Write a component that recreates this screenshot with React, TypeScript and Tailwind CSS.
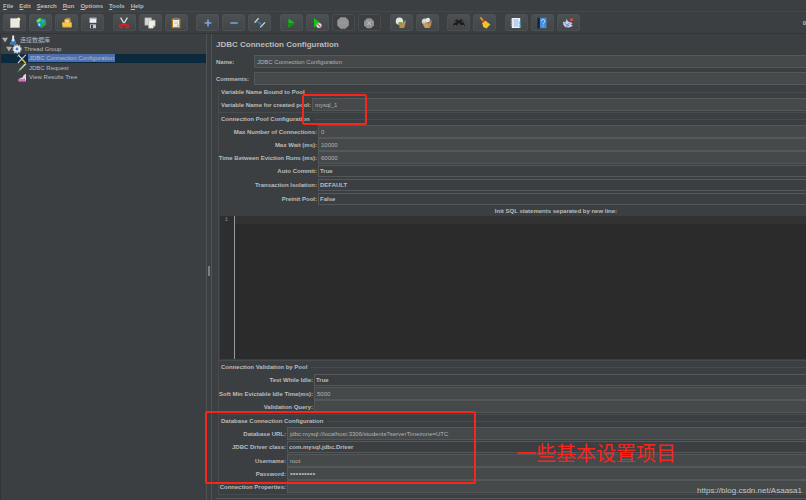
import React, { ReactNode, useState } from "react";

const svgProps = { viewBox: "0 0 12 12", className: "size-3 shrink-0", "aria-hidden": true } as const;
const treeSvgProps = { viewBox: "0 0 12 12", className: "size-[10px] shrink-0", "aria-hidden": true } as const;

const HAND = "M3.6 6 4.4 8v3H9l1.2-3L11 2 9.6 5 9 2.4 8 6 6 5z";

const ICONS: Record<string, ReactNode> = {
  new: (
    <svg {...svgProps}>
      <path d="M1.5 1.5h9v9h-9z" fill="#e9e9e2" stroke="#c9c9c0" strokeWidth=".6" />
      <circle cx="9.6" cy="2.2" r="1.6" fill="#f4efb4" />
    </svg>
  ),
  templates: (
    <svg {...svgProps}>
      <path d="M1.2 3.2 5 .8l5.6 1.6.6 5L6.6 11 2.4 8z" fill="#25a83c" />
      <path d="M1.5 3.5 5 1l1 2.4-3 2.4z" fill="#7fdc62" />
      <path d="m2.6 5.6 3.6-1 .6 6.2-3.6-1.6z" fill="#1d8fd0" />
      <path d="m6 2.4 3.8.8-1 3.2-2.6-.6z" fill="#2f9fe0" />
      <path d="m3.6 6.2 1.6.6v2.6l-1.6-1z" fill="#b5ecff" />
    </svg>
  ),
  open: (
    <svg {...svgProps}>
      <path d="M3 5.5V2.4L5.6.8h3.2l1 1.6v3z" fill="#b8832d" />
      <path d="M4.2 2.6h4V6h-4z" fill="#ecdca8" />
      <path d="M1 5.4h9.8v5.2H1.6z" fill="#e5a931" />
      <path d="M1.4 5.6h8.8v3.8H1.8z" fill="#f3c551" />
    </svg>
  ),
  save: (
    <svg {...svgProps}>
      <path d="M.8.8h10.4v10.4H2L.8 10z" fill="#444a53" />
      <path d="M2.6.8h6.8v5H2.6z" fill="#f1f1f1" />
      <path d="M2.6.8h6.8v1.4H2.6z" fill="#a7b3c4" />
      <path d="M3 7.4h6v3.8H3z" fill="#c5c8cc" />
      <path d="M4 8h1.8v3H4z" fill="#30343a" />
    </svg>
  ),
  cut: (
    <svg {...svgProps}>
      <path d="m2.6.6 4 6.8M9.4.6l-4 6.8" stroke="#dfe3e6" strokeWidth="1.2" />
      <path d="m6 6.4-1.6 1.2M6 6.4l1.6 1.2" stroke="#dc2020" strokeWidth="1.8" />
      <circle cx="3" cy="9.2" r="1.5" fill="none" stroke="#dc2020" strokeWidth="1.4" />
      <circle cx="9" cy="9.2" r="1.5" fill="none" stroke="#dc2020" strokeWidth="1.4" />
    </svg>
  ),
  copy: (
    <svg {...svgProps}>
      <path d="M.8.8h6.7v7.5H.8z" fill="#d8d8d5" stroke="#9c9c98" strokeWidth=".5" />
      <path d="M4.5 3.2h6.7v5.6l-2 2.4H4.5z" fill="#eeeeea" stroke="#a9a9a4" strokeWidth=".5" />
      <path d="M9 11V8.8h2.2z" fill="#9d9d98" />
    </svg>
  ),
  paste: (
    <svg {...svgProps}>
      <path d="M1.8 1.5h8.6v9.8H1.8z" fill="#bb7a20" />
      <path d="M3 2.7h6.2v7.2H3z" fill="#eeeeea" />
      <path d="M4 .7h4v2.2H4z" fill="#777a7d" />
      <path d="M4.2 5h3.8M4.2 6.6h3.8" stroke="#b7b7b7" strokeWidth=".6" />
      <path d="M7.2 9.9V7.8h2z" fill="#aaa" />
    </svg>
  ),
  expand: (
    <svg {...svgProps}>
      <path d="M6 2.6v6.8M2.6 6h6.8" stroke="#75a8e5" strokeWidth="1.5" />
    </svg>
  ),
  collapse: (
    <svg {...svgProps}>
      <path d="M2.3 6h7.4" stroke="#75a8e5" strokeWidth="1.5" />
    </svg>
  ),
  toggle: (
    <svg {...svgProps}>
      <path d="m.6 5.6 4-4.4" stroke="#d7ddd2" strokeWidth="1.3" />
      <path d="m1.2 6.2 2-2" stroke="#74a766" strokeWidth=".9" />
      <path d="m6.2 10.4 4.8-5" stroke="#d7ddd2" strokeWidth="1.3" />
      <path d="m6.4 11 2-2" stroke="#74a766" strokeWidth=".9" />
      <path d="m4.4 5 2.8 2.5" stroke="#2878cf" strokeWidth="1.7" />
    </svg>
  ),
  start: (
    <svg {...svgProps}>
      <path d="M3.5 1.5 9.5 6l-6 4.8z" fill="#14c414" />
      <path d="M3.5 6h6l-6 4.8z" fill="#0a980a" />
    </svg>
  ),
  startNoPause: (
    <svg {...svgProps}>
      <path d="M3 1 9 5.8l-6 5z" fill="#14c414" />
      <circle cx="8" cy="8.5" r="2.5" fill="#e9eef4" stroke="#8198b2" strokeWidth=".5" />
      <path d="m6.5 7 3 3" stroke="#e34646" strokeWidth="1.1" />
    </svg>
  ),
  stop: (
    <svg {...svgProps}>
      <path d="M3.5.2h5L11.8 3.5v5L8.5 11.8h-5L.2 8.5v-5z" fill="#939393" />
      <path d="M2.5 6h7" stroke="#9e9e9e" />
    </svg>
  ),
  shutdown: (
    <svg {...svgProps}>
      <path d="M4 1.2h4l3 3v4l-3 3H4l-3-3v-4z" fill="#929292" />
      <path d="m4.4 4.4 3.4 3.4m0-3.4L4.4 7.8" stroke="#bababa" strokeWidth="1.1" />
    </svg>
  ),
  clear: (
    <svg {...svgProps}>
      <circle cx="4.4" cy="4.2" r="3.6" fill="#e6e8e4" />
      <path d={HAND} fill="#b98a55" />
      <path d="M3.4 5.2h3.8v2H3.4z" fill="#62b431" />
    </svg>
  ),
  clearAll: (
    <svg {...svgProps}>
      <circle cx="3.8" cy="4.4" r="3" fill="#d6d7d3" />
      <circle cx="7" cy="3" r="2.2" fill="#e6e8e4" />
      <path d={HAND} fill="#b98a55" />
      <path d="m2 5.4.4 3L4 11h3V7L4.6 5.4 4 6.6z" fill="#c79b69" />
    </svg>
  ),
  search: (
    <svg {...svgProps}>
      <path d="M2.8 2.4h2l.6 1h1.2l.6-1h2l2.4 4.8v2H7.8L7.2 6.6H4.8L4.2 9.2H.4v-2z" fill="#1c1c1d" />
      <path d="M1 8.8h2.6M8.4 8.8H11" stroke="#9c5b36" />
      <path d="m3.2 3.8-1 2M8.8 3.8l1 2" stroke="#777" strokeWidth=".6" />
    </svg>
  ),
  resetSearch: (
    <svg {...svgProps}>
      <path d="m1.4.4 2.8 3.4" stroke="#dc9830" strokeWidth="1.8" />
      <path d="m2.4 4.8 3.4-2.4 1 1.6-3.4 2.4z" fill="#cf3327" />
      <path d="m3.2 6.2 3.4-2.4 4.8 3.8-4 3.8-3-1.4z" fill="#f2cc29" />
      <path d="m5.4 6.4 2.8 3.4M7 5.4l3 2.8" stroke="#b88a14" strokeWidth=".4" />
    </svg>
  ),
  functions: (
    <svg {...svgProps}>
      <path d="M1.8 1h8.4v10H1.8z" fill="#f1f4f8" />
      <path d="M3.6 3h5M3.6 5h5M3.6 7h5M3.6 9h5" stroke="#6d9ddb" strokeWidth=".8" />
      <path d="M.8 2.3h2M.8 4.3h2M.8 6.3h2M.8 8.3h2" stroke="#c5c8cb" strokeWidth=".7" />
      <path d="M9.5 4.5h1.6v3H9.5z" fill="#3583d8" />
      <path d="M9.5 8h1.6v2.8H9.5z" fill="#49ae3d" />
    </svg>
  ),
  help: (
    <svg {...svgProps}>
      <path d="M1.6.8h3v10.4h-3z" fill="#141b25" />
      <path d="M3.8.8h6.6v10.4H3.8z" fill="#458cdf" />
      <path d="M5.4 4.2c0-2.2 3.4-2.2 3.4 0 0 1.5-1.7 1.3-1.7 3M7.1 8.4v1" fill="none" stroke="#d7e9ff" strokeWidth=".9" />
    </svg>
  ),
  plugins: (
    <svg {...svgProps}>
      <path d="m1 4.4 2.6.8L4.4 2l1.8 2.4L10.6 6 9 7.4l2 1.4-3.6 1.6-4-.2L1.4 8z" fill="#c6cbe9" />
      <path d="m2.6 6 2.2 2 3-1.8M4 9.2l3.4-.8" fill="none" stroke="#6775bd" strokeWidth=".8" />
      <circle cx="9.6" cy="2.6" r="1.7" fill="#d94a36" />
    </svg>
  ),
  plan: (
    <svg {...treeSvgProps}>
      <path d="M5 .5h2.4v4L10 11H2.4L5 4.5z" fill="#d9e5ef" />
      <path d="M4 7h4.4l1.6 4H2.4z" fill="#247bd0" />
      <path d="M5.6 5h1v3h-1z" fill="#fff" />
    </svg>
  ),
  threads: (
    <svg {...treeSvgProps}>
      <circle cx="6" cy="6" r="4.6" fill="none" stroke="#bfd2e6" strokeWidth="1.8" strokeDasharray="2 .9" />
      <circle cx="6" cy="6" r="4" fill="#e6edf3" />
      <circle cx="6" cy="6" r="1.7" fill="#4d7faf" />
    </svg>
  ),
  config: (
    <svg {...treeSvgProps}>
      <path d="m1.4 1.2 5 5" stroke="#d2d5d6" strokeWidth="1.5" />
      <path d="m6.2 6.5 4.4 4.6" stroke="#e4b22c" strokeWidth="2" />
      <path d="m10.8.8-9.6 10" stroke="#c8cbc9" strokeWidth="1.3" />
      <path d="M.5 2.8 3 .5" stroke="#b5b8b9" strokeWidth="1.2" />
    </svg>
  ),
  sampler: (
    <svg {...treeSvgProps}>
      <path d="M10.6 1 7.4 3.8" stroke="#cdd3ce" strokeWidth="1.8" />
      <path d="M8 3.4 3 8.6" stroke="#a5cf94" strokeWidth="2" />
      <path d="M5 6.7.8 11" stroke="#4d9443" strokeWidth="1.2" />
    </svg>
  ),
  listener: (
    <svg {...treeSvgProps}>
      <path d="m2 8.4 3-1.6 1.6.2L8 4l2.8-1.8V11H2z" fill="#ece6f0" />
      <path d="m2 9 2.6-1.6 2 1.4L9 7l1.8 4H2z" fill="#dc6cc4" />
      <path d="m8 5 2.8-2v4z" fill="#b5dcec" />
    </svg>
  ),
};

const MENUS = ["File", "Edit", "Search", "Run", "Options", "Tools", "Help"];

const TOOLBAR = [
  ["new", "templates", "open", "save"],
  ["cut", "copy", "paste"],
  ["expand", "collapse", "toggle"],
  ["start", "startNoPause", "stop", "shutdown"],
  ["clear", "clearAll"],
  ["search", "resetSearch"],
  ["functions", "help", "plugins"],
];

const DISABLED = ["stop", "shutdown"];

const TREE = [
  { id: "plan", label: "连接数据库", indent: "pl-px", open: true },
  { id: "threads", label: "Thread Group", indent: "pl-[5px]", open: true },
  { id: "config", label: "JDBC Connection Configuration", indent: "pl-4", open: false },
  { id: "sampler", label: "JDBC Request", indent: "pl-4", open: false },
  { id: "listener", label: "View Results Tree", indent: "pl-4", open: false },
];

type FieldProps = {
  id: string;
  label: string;
  value?: string;
  kind?: "text" | "password" | "select";
  labelWidth: string;
  align?: string;
};

function Field({ id, label, value = "", kind = "text", labelWidth, align = "justify-end" }: FieldProps) {
  return (
    <div className="flex items-center">
      <label htmlFor={id} className={`flex shrink-0 whitespace-nowrap pr-px font-bold ${labelWidth} ${align}`}>
        {label}
      </label>
      {kind === "select" ? (
        <select
          id={id}
          defaultValue={value}
          className="my-px h-3 min-w-0 flex-1 appearance-none border border-r-0 border-[#55585a] bg-[#3c3f41] pl-px font-bold leading-[10px] outline-none"
        >
          <option>{value}</option>
        </select>
      ) : (
        <input
          id={id}
          type={kind}
          defaultValue={value}
          className={`h-[13px] min-w-0 flex-1 border border-r-0 border-[#55585a] bg-[#45494a] pl-[2px] text-[#b4b4b4] outline-none ${
            kind === "password" ? "text-[8px]" : ""
          }`}
        />
      )}
    </div>
  );
}

function Group({ title, children, grow = false }: { title: string; children: ReactNode; grow?: boolean }) {
  return (
    <section className={`flex flex-col border-b border-l border-[#484b4d] pb-px pl-px ${grow ? "flex-1" : ""}`}>
      <h2 className="flex h-3 items-center gap-1 pl-px font-bold after:h-px after:flex-1 after:bg-[#484b4d]">{title}</h2>
      {children}
    </section>
  );
}

export default function App() {
  const [selected, setSelected] = useState("config");

  return (
    <div className="relative flex min-h-screen flex-col overflow-hidden bg-[#3c3f41] font-['Liberation_Sans','Noto_Sans_CJK_SC',sans-serif] text-[6px] leading-[8px] text-[#bbbbbb]">
      <nav className="flex h-3 items-center gap-[6px] border-b border-[#4a4542] pl-[3px]">
        {MENUS.map((menu) => (
          <button key={menu} className="font-bold">
            <span className="underline">{menu[0]}</span>
            {menu.slice(1)}
          </button>
        ))}
      </nav>

      <header className="flex h-[22px] items-center justify-between overflow-hidden border-b border-[#333638] pl-[3px]">
        <div className="flex w-full max-w-[577px] shrink-0 justify-between">
          {TOOLBAR.map((group) => (
            <div key={group[0]} className="flex gap-[3px]">
              {group.map((name) => (
                <button
                  key={name}
                  aria-label={name}
                  disabled={DISABLED.includes(name)}
                  className={`flex h-[17px] w-[23px] items-center justify-center rounded-[2px] border ${
                    DISABLED.includes(name) ? "border-[#494c4e] bg-[#3c3f41]" : "border-[#4c5052] bg-linear-to-b from-[#4b5052] to-[#424648]"
                  }`}
                >
                  {ICONS[name]}
                </button>
              ))}
            </div>
          ))}
        </div>
        <span className="font-bold">0</span>
      </header>

      <div className="flex flex-1">
        <aside className="w-[206px] shrink-0 border-l border-[#323537]">
          <ul className="grid h-12 grid-rows-5 pt-px">
            {TREE.map((node) => (
              <li key={node.id} className={`min-h-0 ${selected === node.id ? "bg-[#0d293e]" : ""}`}>
                <button onClick={() => setSelected(node.id)} className={`flex h-full w-full items-center whitespace-nowrap ${node.indent}`}>
                  {node.open && (
                    <svg viewBox="0 0 6 6" className="size-[6px] shrink-0" aria-hidden>
                      <path d="M0 .8h6L3 5.4z" fill="#adadad" />
                    </svg>
                  )}
                  {ICONS[node.id]}
                  <span className={`ml-px px-px ${selected === node.id ? "bg-[#4b6eaf]" : ""}`}>{node.label}</span>
                </button>
              </li>
            ))}
          </ul>
        </aside>

        <div className="flex w-[6px] shrink-0 items-center justify-center border-x border-[#505355] pt-2">
          <div className="h-[10px] w-[2px] bg-[#7b7e80]" />
        </div>

        <main className="flex min-w-0 flex-1 flex-col pl-1">
          <h1 className="pb-[5px] pt-[6px] text-[8px] font-bold leading-[10px]">JDBC Connection Configuration</h1>
          <div className="flex flex-col gap-1">
            <Field id="name" label="Name:" value="JDBC Connection Configuration" labelWidth="w-[38px]" align="justify-start" />
            <Field id="comments" label="Comments:" labelWidth="w-[38px]" align="justify-start" />
          </div>

          <div className="flex flex-1 flex-col pl-[2px] pt-px">
            <Group title="Variable Name Bound to Pool">
              <Field id="pool" label="Variable Name for created pool:" value="mysql_1" labelWidth="w-[92px]" />
            </Group>

            <Group title="Connection Pool Configuration" grow>
              <Field id="max" label="Max Number of Connections:" value="0" labelWidth="w-[98px]" />
              <Field id="wait" label="Max Wait (ms):" value="10000" labelWidth="w-[98px]" />
              <Field id="eviction" label="Time Between Eviction Runs (ms):" value="60000" labelWidth="w-[98px]" />
              <Field id="commit" label="Auto Commit:" value="True" kind="select" labelWidth="w-[98px]" />
              <Field id="isolation" label="Transaction Isolation:" value="DEFAULT" kind="select" labelWidth="w-[98px]" />
              <Field id="preinit" label="Preinit Pool:" value="False" kind="select" labelWidth="w-[98px]" />
              <label htmlFor="sql" className="flex h-[10px] items-center justify-center pl-[86px] font-bold">
                Init SQL statements separated by new line:
              </label>
              <div className="flex min-h-[140px] flex-1 bg-[#2b2b2b]">
                <div className="w-[15px] border-r border-[#999] bg-[#2d2e2f] pr-[6px] text-right font-['Liberation_Mono',monospace] text-[#888]">1</div>
                <textarea
                  id="sql"
                  spellCheck={false}
                  className="flex-1 resize-none bg-linear-to-b from-[#323232] from-[8px] to-[#2b2b2b] to-[8px] outline-none"
                />
              </div>
            </Group>

            <Group title="Connection Validation by Pool">
              <Field id="idle" label="Test While Idle:" value="True" kind="select" labelWidth="w-[94px]" />
              <Field id="evictable" label="Soft Min Evictable Idle Time(ms):" value="5000" labelWidth="w-[94px]" />
              <Field id="query" label="Validation Query:" labelWidth="w-[94px]" />
            </Group>

            <Group title="Database Connection Configuration">
              <Field id="url" label="Database URL:" value="jdbc:mysql://localhost:3306/students?serverTimezone=UTC" labelWidth="w-[67px]" />
              <Field id="driver" label="JDBC Driver class:" value="com.mysql.jdbc.Driver" kind="select" labelWidth="w-[67px]" />
              <Field id="username" label="Username:" value="root" labelWidth="w-[67px]" />
              <Field id="password" label="Password:" value="123456789" kind="password" labelWidth="w-[67px]" />
              <Field id="properties" label="Connection Properties:" labelWidth="w-[67px]" />
            </Group>
          </div>
          <div className="mt-[3px] h-[2px] border-t border-[#55585a]" />
        </main>
      </div>

      {/* Annotations over the window */}
      <div className="pointer-events-none absolute left-[302px] top-[94px] h-[31px] w-[65px] rounded-[2px] border-2 border-[#f8251b]" />
      <div className="pointer-events-none absolute left-[205px] top-[411px] h-[73px] w-[271px] rounded-[2px] border-2 border-[#f8251b]" />
      <p className="pointer-events-none absolute left-[516px] top-[440px] text-[20px] leading-[28px] text-[#f8251b]">一些基本设置项目</p>
      <p className="pointer-events-none absolute bottom-1 right-1 text-[8px] leading-[11px] text-[#c4c4c4]">https://blog.csdn.net/Asaasa1</p>
    </div>
  );
}
